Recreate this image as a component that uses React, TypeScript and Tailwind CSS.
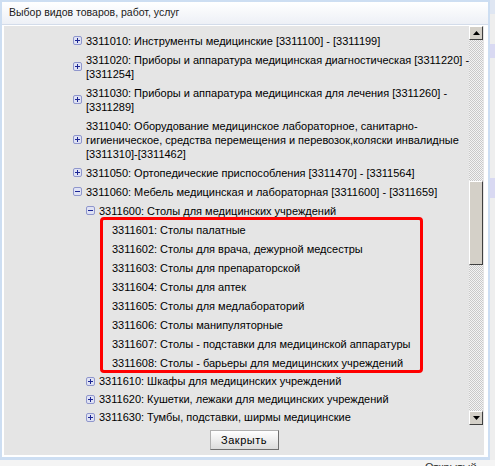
import React from 'react';

type Row = { level: number; icon?: 'plus' | 'minus'; lines: string[] };

const topRows: Row[] = [
  { level: 0, icon: 'plus', lines: ['3311010: Инструменты медицинские [3311100] - [3311199]'] },
  {
    level: 0,
    icon: 'plus',
    lines: ['3311020: Приборы и аппаратура медицинская диагностическая [3311220] -', '[3311254]'],
  },
  {
    level: 0,
    icon: 'plus',
    lines: ['3311030: Приборы и аппаратура медицинская для лечения [3311260] -', '[3311289]'],
  },
  {
    level: 0,
    icon: 'plus',
    lines: [
      '3311040: Оборудование медицинское лабораторное, санитарно-',
      'гигиеническое, средства перемещения и перевозок,коляски инвалидные',
      '[3311310]-[3311462]',
    ],
  },
  { level: 0, icon: 'plus', lines: ['3311050: Ортопедические приспособления [3311470] - [3311564]'] },
  { level: 0, icon: 'minus', lines: ['3311060: Мебель медицинская и лабораторная [3311600] - [3311659]'] },
  { level: 1, icon: 'minus', lines: ['3311600: Столы для медицинских учреждений'] },
];

const leafRows = [
  '3311601: Столы палатные',
  '3311602: Столы для врача, дежурной медсестры',
  '3311603: Столы для препараторской',
  '3311604: Столы для аптек',
  '3311605: Столы для медлабораторий',
  '3311606: Столы манипуляторные',
  '3311607: Столы - подставки для медицинской аппаратуры',
  '3311608: Столы - барьеры для медицинских учреждений',
];

const bottomRows: Row[] = [
  { level: 1, icon: 'plus', lines: ['3311610: Шкафы для медицинских учреждений'] },
  { level: 1, icon: 'plus', lines: ['3311620: Кушетки, лежаки для медицинских учреждений'] },
  { level: 1, icon: 'plus', lines: ['3311630: Тумбы, подставки, ширмы медицинские'] },
];

const TreeIcon = ({ kind }: { kind: 'plus' | 'minus' }) => (
  <svg width="9" height="9" viewBox="0 0 9 9" className="shrink-0">
    <rect x="0.5" y="0.5" width="8" height="8" rx="1.5" fill="#dfe2f4" stroke="#8f96cc" />
    <line x1="2" y1="4.5" x2="7" y2="4.5" stroke="#1c2694" strokeWidth="1" />
    {kind === 'plus' && <line x1="4.5" y1="2" x2="4.5" y2="7" stroke="#1c2694" strokeWidth="1" />}
  </svg>
);

const TreeRow = ({ row, tight }: { row: Row; tight?: boolean }) => (
  <div
    className={`flex items-center gap-[4px] ${tight ? 'py-[2px]' : 'py-[2.5px]'} ${
      row.level === 0 ? 'ml-[69px]' : 'ml-[82px]'
    }`}
  >
    {row.icon && <TreeIcon kind={row.icon} />}
    <div className="flex flex-col">
      {row.lines.map((line) => (
        <span key={line} className="whitespace-nowrap leading-[14px]">
          {line}
        </span>
      ))}
    </div>
  </div>
);

const ScrollButton = ({ up }: { up?: boolean }) => (
  <div className="h-[14px] w-[14px] flex items-center justify-center bg-[#d4d0c8] border border-t-white border-l-white border-r-[#404040] border-b-[#404040]">
    <svg width="7" height="4" viewBox="0 0 7 4">
      {up ? <polygon points="0,4 7,4 3.5,0" fill="#000" /> : <polygon points="0,0 7,0 3.5,4" fill="#000" />}
    </svg>
  </div>
);

export default function App() {
  return (
    <div className="w-[495px] h-[466px] overflow-hidden bg-white font-['Liberation_Sans',Arial,sans-serif] text-[11px] text-black">
      <div className="flex h-[460px]">
        {/* dialog */}
        <div className="w-[490px] h-[460px] bg-[#cddef2] p-[2px] pb-[3px]">
          <div className="h-full bg-white flex flex-col">
            <div className="h-[23px] shrink-0 flex items-center pl-[7px] border-b border-[#d3dcea] bg-gradient-to-b from-white to-[#edf0f6] text-[10.5px] text-[#1a1a1a]">
              Выбор видов товаров, работ, услуг
            </div>
            <div className="flex-1 mt-px ml-[2px] mr-[4px] mb-[2px] bg-[#e5e5e5] flex flex-col">
              <div className="h-[399px] flex">
                <div className="flex-1 overflow-hidden pt-[5px]">
                  {topRows.map((row) => (
                    <TreeRow key={row.lines[0]} row={row} />
                  ))}
                  <div className="relative ml-[96px]">
                    {leafRows.map((line) => (
                      <div key={line} className="py-[2.5px] pl-[12px] leading-[14px] whitespace-nowrap">
                        {line}
                      </div>
                    ))}
                    <div className="absolute -top-[3px] -bottom-[1px] left-0 w-[323px] border-[3px] border-[#ff0000] rounded-[4px]" />
                  </div>
                  {bottomRows.map((row) => (
                    <TreeRow key={row.lines[0]} row={row} tight />
                  ))}
                </div>
                <div className="w-[14px] flex flex-col mr-px">
                  <ScrollButton up />
                  <div className="flex-1 flex flex-col bg-[repeating-conic-gradient(#c9c9c9_0%_25%,#f4f4f4_0%_50%)] bg-[length:2px_2px]">
                    <div className="h-[141px]" />
                    <div className="h-[84px] bg-[#d4d0c8] border border-t-white border-l-white border-r-[#404040] border-b-[#404040]" />
                  </div>
                  <ScrollButton />
                </div>
              </div>
              <div className="flex-1 flex justify-center pt-[5px]">
                <button className="h-[20px] w-[69px] bg-gradient-to-b from-white to-[#dcdcdc] border border-[#b0b0b0] border-r-[#6f6f6f] border-b-[#6f6f6f] text-[11px] tracking-[0.5px]">
                  Закрыть
                </button>
              </div>
            </div>
          </div>
        </div>
        {/* page behind */}
        <div className="flex-1 flex flex-col bg-[#eeeeee]">
          <div className="h-[14px] bg-[#dfe6f2]" />
          <div className="h-[30px]" />
          <div className="h-[14px] bg-[#d9d9f2]" />
          <div className="h-[120px]" />
          <div className="h-[20px] bg-[#d9d9f2]" />
        </div>
      </div>
      <div className="h-[6px] bg-[#f4f4f4] relative">
        <span className="absolute left-[425px] top-[1px] leading-[12px] text-[#333]">Открытый</span>
      </div>
    </div>
  );
}
